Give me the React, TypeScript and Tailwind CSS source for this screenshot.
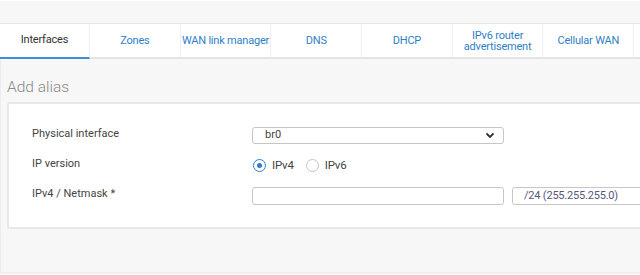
const tabs = [
  { label: "Interfaces", active: true },
  { label: "Zones" },
  { label: "WAN link manager" },
  { label: "DNS" },
  { label: "DHCP" },
  { label: "IPv6 router\nadvertisement" },
  { label: "Cellular WAN" },
];

const Radio = ({ checked, label }: { checked?: boolean; label: string }) => (
  <label className="flex items-center gap-[6px]">
    <span
      className={
        checked
          ? "flex h-[13px] w-[13px] items-center justify-center rounded-full border-[1.5px] border-[#2f7fc6] bg-white"
          : "flex h-[13px] w-[13px] items-center justify-center rounded-full border border-[#c4c4c4] bg-white"
      }
    >
      {checked && <span className="h-[5px] w-[5px] rounded-full bg-[#2f7fc6]" />}
    </span>
    <span className="text-[11.5px] tracking-[-0.2px] text-[#444]">{label}</span>
  </label>
);

export default function App() {
  return (
    <div className="h-[275px] w-[640px] overflow-hidden bg-[#f7f7f7] font-['Roboto',sans-serif]">
      <div className="h-[24px] w-full border-t border-b border-t-white border-b-[#e6e6e6] bg-[#f7f7f7]" />
      <div className="flex h-[35px] w-full border-b-2 border-[#e4e4e4] bg-white">
        {tabs.map((t) => (
          <div
            key={t.label}
            className={
              t.active
                ? "flex w-[90px] shrink-0 items-center justify-center border-r border-[#f0f0f0] border-b-2 border-b-[#3b8fd6] -mb-[2px] text-[11px] tracking-[-0.2px] text-[#333]"
                : "flex w-[90.7px] shrink-0 items-center justify-center whitespace-pre-line border-r border-[#f0f0f0] text-center text-[11px] leading-[11px] tracking-[-0.2px] text-[#2f7fc6]"
            }
          >
            {t.label}
          </div>
        ))}
      </div>
      <div className="h-[214px] w-[700px] border-l border-b border-[#ececec] pl-[6px] pt-[18px]">
        <h2 className="text-[15.5px] leading-[20px] font-light text-[#8a8a8a]">Add alias</h2>
        <div className="mt-[5px] flex flex-col gap-[13px] rounded-[3px] border-2 border-[#e8e8e8] bg-white pb-[22px] pl-[23px] pt-[23px]">
          <div className="flex items-start">
            <div className="w-[220px] text-[11px] leading-[14px] text-[#444]">Physical interface</div>
            <div className="flex h-[17px] w-[252px] items-center justify-between rounded-[3px] border border-[#c6c6c6] pl-[12px] pr-[8px] text-[11px] text-[#444]">
              <span>br0</span>
              <svg width="10" height="7" viewBox="0 0 10 7">
                <path d="M1.5 1.5 L5 5 L8.5 1.5" fill="none" stroke="#333" strokeWidth="1.8" />
              </svg>
            </div>
          </div>
          <div className="flex items-center">
            <div className="-mt-[4px] w-[220px] text-[11px] leading-[14px] text-[#444]">IP version</div>
            <div className="flex items-center gap-[12px] pl-[1px]">
              <Radio checked label="IPv4" />
              <Radio label="IPv6" />
            </div>
          </div>
          <div className="flex items-start">
            <div className="w-[220px] text-[11px] leading-[14px] text-[#444]">IPv4 / Netmask *</div>
            <div className="h-[18px] w-[252px] rounded-[3px] border border-[#c6c6c6]" />
            <div className="ml-[8px] flex h-[18px] w-[180px] items-center rounded-[3px] border border-[#c6c6c6] pl-[11px] text-[11px] tracking-[-0.2px] text-[#55577a]">
              /24 (255.255.255.0)
            </div>
          </div>
        </div>
      </div>
    </div>
  );
}
